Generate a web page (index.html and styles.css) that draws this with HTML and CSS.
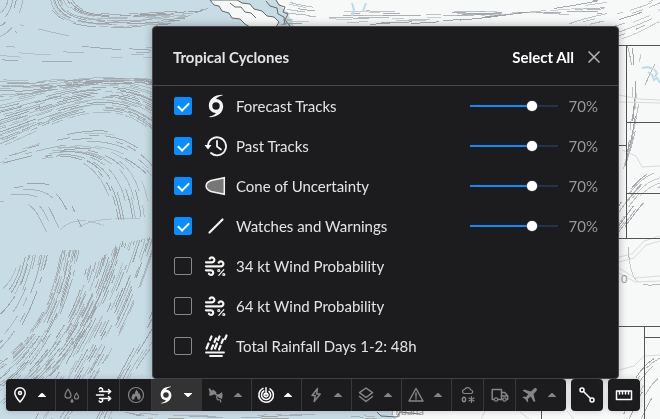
FILE: index.html
```html
<!DOCTYPE html>
<html lang="en">
<head>
<meta charset="utf-8">
<meta name="viewport" content="width=device-width, initial-scale=1">
<title>Tropical Cyclones</title>
<link rel="stylesheet" href="styles.css">
</head>
<body>
<svg class="map" viewBox="0 0 660 419" preserveAspectRatio="xMinYMin slice" aria-hidden="true">
  <rect class="water" width="660" height="419"/>
  <path class="land" d="M276 0L288 14 296 30 330 200 372 380 384 402 396 419H660V0z"/>
  <path class="land coast" d="M210 0l4 5 5 1 3 5 7 2 3 5 8 1 5 5 5 3h26l3-5-5-5-7-1-5-5-8-2-4-5-8-1-5-3z"/>
  <path class="coast-line" d="M276 0l3 5 6 2-2 5 5 2-3 6 5 6M266 1l4 5 7 2 1 6 6 3 1 8M230 3l5 4 6 0 4 5 6 1 5 5M377 412l4 4 16 1 3-5 20 2"/>
  <g id="wind"></g>
  <path class="road" d="M619 95l20 4 21 1M619 102l41 1M622 150l14 6 6 11 18-1M619 257l13-3 12-13 16-5M619 262l15-4 12-13 14-4M619 268l8 5 8 5 25-2M619 273l7 4 9 5 25-1M619 370l15-4 10-10 16-1M567 411l7 8M520 412l9 7M485 411l-4 8"/>
  <path class="lake" d="M642 68l6-1 5 2M648 72l4 3 2 5 3-2 3 5M654 69l3 4-2 4"/>
  <path class="lake" d="M352 3l2 7-2 6M366 3l-3 8"/>
  <path class="border" d="M618 45.5h42M618 145.5h8M627 122.5h33M627 193.5h33M618 238.500h42M618 326.500h42M626.500 45v193M644.500 327v92M644 337.500h16M541.500 403v16"/>
  <text class="place" x="389" y="415">Tijuana</text>
  <text class="place" x="621" y="283">0</text>
</svg>

<svg class="sprite" aria-hidden="true">
  <symbol id="i-cyclone" viewBox="0 0 24 24"><path fill="currentColor" fill-rule="evenodd" d="M18.500 .8C10 .8 4.800 5.500 4.800 12a7 7 0 0 0 7.200 7C10.700 21 8.500 22 5.500 22.600v.6c8.500 0 13.700-4.700 13.700-11.200a7 7 0 0 0-7.200-7c1.300-2 3.500-3 6.500-3.600zM12 8.300a3.700 3.700 0 1 1 0 7.400 3.700 3.700 0 0 1 0-7.400z"/></symbol>
  <symbol id="i-history" viewBox="0 0 24 24"><path class="s2" d="M4 12a9 9 0 1 1 3 7M13 7v5.500l4 3"/><path fill="currentColor" d="M.5 11h7L4 15.500z"/></symbol>
  <symbol id="i-cone" viewBox="0 0 24 24"><path fill="#777" stroke="currentColor" stroke-width="1.500" d="M20.300 3.700v16.600L7 17.500c-6.500-2.500-6.500-8.500 0-11z"/></symbol>
  <symbol id="i-line" viewBox="0 0 24 24"><path class="s25" d="M5.500 18.500l13-13"/></symbol>
  <symbol id="i-windpct" viewBox="0 0 24 24"><path class="s25" d="M2 8.300h6a2.500 2.500 0 1 0-2.300-3.700M2 12.300h15a2.500 2.500 0 1 0-2.300-3.700M2 16.300h5a2.300 2.300 0 1 1-2.100 3.400"/><path class="s1" d="M14.800 21.300l5-5.600"/><circle class="s1" cx="14.800" cy="16.500" r="1"/><circle class="s1" cx="19.800" cy="20.500" r="1"/></symbol>
  <symbol id="i-rain" viewBox="0 0 24 24"><path class="s2" d="M2 18.500h18M6 22h12"/><path class="s25" d="M7.500 2.500L6 6M4.500 9.500l-2 5M12 4.500L10.500 8M9 11.500L7.500 15M15.500 2.500L14 6M13 9.500L11 14.500M19 5.500L17.500 9M16.500 12L15 15.500M22.500 1.500L21 5"/></symbol>
  <symbol id="i-pin" viewBox="0 0 18 18"><path class="s15" d="M9 16C6 12.600 3.800 10 3.800 7a5.200 5.200 0 0 1 10.400 0c0 3-2.200 5.600-5.200 9z"/><circle class="s15" cx="9" cy="7" r="1.500"/></symbol>
  <symbol id="i-drops" viewBox="0 0 18 18"><path class="s1" d="M5 3C3.500 5.500 2 7.200 2 9.200a3 3 0 0 0 6 0C8 7.200 6.500 5.500 5 3zM13.500 7c-1 1.600-2 2.700-2 4a2 2 0 0 0 4 0c0-1.300-1-2.400-2-4z"/><path fill="currentColor" d="M9 12.500c-1 1.500-1.500 2-1.500 2.700a1.500 1.500 0 0 0 3 0c0-.7-.5-1.200-1.500-2.700z"/></symbol>
  <symbol id="i-wind" viewBox="0 0 18 18"><path class="s15" d="M4.500 5.500H15.500M1.500 9h7M4.500 12.500H15.500M4.500 5.500H6a1.800 1.800 0 1 0-1.800-2.500M6 12.500a1.800 1.800 0 1 1-1.800 2.500M13.500 3.500l2.200 2-2.200 2M13.500 10.500l2.200 2-2.200 2"/></symbol>
  <symbol id="i-fire" viewBox="0 0 18 18"><circle class="s1" cx="9" cy="9" r="7.500"/><path fill="currentColor" d="M5 13.500c-1.500-3 1-4.500 1-6l1.300 1C8 6.500 9 5 9 3.500c2 1.500 2.500 3 2.800 4.500l.9-.7c.2 2 2 3.700.3 6.200h-2.500c.3-1.500-.5-2.500-1.500-3.500-1 1-1.800 2-1.500 3.500z"/></symbol>
  <symbol id="i-satellite" viewBox="0 0 18 18"><path fill="currentColor" d="M1.500 2.500l1.200-.3 2.200 2.600 1.300-1.300L9.500 6.300 9 7.600l1.700.9 1.700-.5 2.600-2 .6 3.500-.6 3.500-2.600-1-1.700-1.200L9.300 9.500 7 8.300 5 9.500H2l.7-3z"/><path class="s1" d="M9.500 10.500l1 3.200 3 .3.200 2"/></symbol>
  <symbol id="i-radar" viewBox="0 0 18 18"><path class="s15" d="M9 9V1.800M13 2.800A7.300 7.300 0 1 1 6 2.400M12 5.400A4.600 4.600 0 1 1 6.800 5M10.400 7.500a2 2 0 1 1-2.800 0"/></symbol>
  <symbol id="i-bolt" viewBox="0 0 18 18"><path class="s15" d="M10.500 2.500L5 9.500h3.200l-1 6 6-7.500H9.700z"/></symbol>
  <symbol id="i-layers" viewBox="0 0 18 18"><path class="s15" d="M9 2l6.500 4.700L9 11.500 2.500 6.700zM2.500 10.500L9 15.500l6.500-5"/></symbol>
  <symbol id="i-warn" viewBox="0 0 18 18"><path class="s15" d="M9 2.500l7 12.500H2zM9 7v4M9 12.600v.4"/></symbol>
  <symbol id="i-snow" viewBox="0 0 18 18"><path class="s1" d="M5.500 7.500a2 2 0 0 1 .1-4 3.300 3.300 0 0 1 6.200.5A1.800 1.800 0 0 1 12.500 7.500zM12.500 10.500v6M10 12l5 3M15 12l-5 3"/><ellipse class="s15" cx="5" cy="13.500" rx="1.600" ry="2.200"/></symbol>
  <symbol id="i-truck" viewBox="0 0 18 18"><path class="s15" d="M3 13.500H1.200v-10h9.300v10H7M10.500 6.500h3.200l3 3.500v3.500h-1.200M10.500 13.500h1M10.500 10h6"/><circle class="s1" cx="5" cy="13.500" r="1.700"/><circle class="s1" cx="13.500" cy="13.500" r="1.700"/></symbol>
  <symbol id="i-plane" viewBox="0 0 18 18"><path fill="currentColor" d="M15.500 2.500c-1-1-2.200-.3-3 .5L10 5.500 3 3.500 1.700 4.800l5.600 3.400-2.500 2.700-2.300-.3-1 1 3 1.700 1.700 3 1-1-.3-2.300 2.800-2.500 3.300 5.700 1.300-1.300L12.500 8 15 5.500c.8-.8 1.500-2 .5-3z"/></symbol>
  <symbol id="i-path" viewBox="0 0 18 18"><path class="s15" d="M5.500 5.500l7 7"/><circle class="s15" cx="4" cy="4" r="2"/><circle class="s15" cx="14" cy="14" r="2"/></symbol>
  <symbol id="i-ruler" viewBox="0 0 18 18"><path class="s15" d="M1.500 5h15v8.500h-15zM4.500 5v3M7.500 5v3M10.500 5v3M13.500 5v3"/></symbol>
  <symbol id="i-close" viewBox="0 0 12 12"><path d="M.5 .5l11 11M11.500 .5l-11 11" fill="none" stroke="currentColor" stroke-width="1.500"/></symbol>
  <symbol id="i-caret" viewBox="0 0 8 4"><path fill="currentColor" d="M0 4V3.500L3.500 0h1L8 3.500V4z"/></symbol>
</svg>

<main class="stage">
  <section class="panel" aria-labelledby="panel-title">
    <header class="panel-head">
      <h1 id="panel-title">Tropical Cyclones</h1>
      <button class="select-all" type="button">Select All</button>
      <button class="close" type="button" aria-label="Close"><svg><use href="#i-close"/></svg></button>
    </header>
    <ul class="layers">
      <li><input type="checkbox" id="l1" checked><svg class="icon"><use href="#i-cyclone"/></svg><label for="l1">Forecast Tracks</label><input type="range" aria-label="Forecast Tracks opacity" value="70"><output>70%</output></li>
      <li><input type="checkbox" id="l2" checked><svg class="icon"><use href="#i-history"/></svg><label for="l2">Past Tracks</label><input type="range" aria-label="Past Tracks opacity" value="70"><output>70%</output></li>
      <li><input type="checkbox" id="l3" checked><svg class="icon"><use href="#i-cone"/></svg><label for="l3">Cone of Uncertainty</label><input type="range" aria-label="Cone of Uncertainty opacity" value="70"><output>70%</output></li>
      <li><input type="checkbox" id="l4" checked><svg class="icon"><use href="#i-line"/></svg><label for="l4">Watches and Warnings</label><input type="range" aria-label="Watches and Warnings opacity" value="70"><output>70%</output></li>
      <li><input type="checkbox" id="l5"><svg class="icon"><use href="#i-windpct"/></svg><label for="l5">34 kt Wind Probability</label></li>
      <li><input type="checkbox" id="l6"><svg class="icon"><use href="#i-windpct"/></svg><label for="l6">64 kt Wind Probability</label></li>
      <li><input type="checkbox" id="l7"><svg class="icon"><use href="#i-rain"/></svg><label for="l7">Total Rainfall Days 1-2: 48h</label></li>
    </ul>
  </section>
  <nav class="toolbar" aria-label="Map layers">
    <div class="group">
      <button class="tool wide on" type="button" aria-label="Places"><svg><use href="#i-pin"/></svg><svg class="caret"><use href="#i-caret"/></svg></button>
      <button class="tool" type="button" aria-label="Precipitation"><svg><use href="#i-drops"/></svg></button>
      <button class="tool on" type="button" aria-label="Wind"><svg><use href="#i-wind"/></svg></button>
      <button class="tool" type="button" aria-label="Fire"><svg><use href="#i-fire"/></svg></button>
      <button class="tool wide on open" type="button" aria-label="Tropical cyclones" aria-expanded="true"><svg><use href="#i-cyclone"/></svg><svg class="caret"><use href="#i-caret"/></svg></button>
      <button class="tool wide" type="button" aria-label="Satellite"><svg><use href="#i-satellite"/></svg><svg class="caret"><use href="#i-caret"/></svg></button>
      <button class="tool wide on" type="button" aria-label="Radar"><svg><use href="#i-radar"/></svg><svg class="caret"><use href="#i-caret"/></svg></button>
      <button class="tool wide" type="button" aria-label="Lightning"><svg><use href="#i-bolt"/></svg><svg class="caret"><use href="#i-caret"/></svg></button>
      <button class="tool wide" type="button" aria-label="Layers"><svg><use href="#i-layers"/></svg><svg class="caret"><use href="#i-caret"/></svg></button>
      <button class="tool wide" type="button" aria-label="Alerts"><svg><use href="#i-warn"/></svg><svg class="caret"><use href="#i-caret"/></svg></button>
      <button class="tool" type="button" aria-label="Winter weather"><svg><use href="#i-snow"/></svg></button>
      <button class="tool" type="button" aria-label="Road conditions"><svg><use href="#i-truck"/></svg></button>
      <button class="tool wide" type="button" aria-label="Aviation"><svg><use href="#i-plane"/></svg><svg class="caret"><use href="#i-caret"/></svg></button>
    </div>
    <div class="group"><button class="tool on" type="button" aria-label="Draw path"><svg><use href="#i-path"/></svg></button></div>
    <div class="group"><button class="tool on" type="button" aria-label="Measure"><svg><use href="#i-ruler"/></svg></button></div>
  </nav>
</main>
<script src="wind.js"></script>
</body>
</html>
```
FILE: styles.css
```css
* { box-sizing: border-box; }

body {
  margin: 0;
  background: #c8dce5;
  color: #e4e4e4;
  font-family: Lato, "Open Sans", sans-serif;
  font-size: 15px;
}

button {
  padding: 0;
  border: 0;
  background: none;
  color: inherit;
  font: inherit;
  cursor: pointer;
}

.map { position: fixed; inset: 0; width: 100%; height: 100%; }
.water { fill: #c8dce5; }
.land { fill: #f7f9f9; }
.coast { stroke: #666; stroke-width: 1; }
.coast-line { fill: none; stroke: #666; stroke-width: 1; }
.road { fill: none; stroke: #dcd8da; stroke-width: 1; }
.lake { fill: none; stroke: #c0d9e8; stroke-width: 2; }
.border { fill: none; stroke: #555; stroke-width: 1; }
.place { fill: #9a9a9a; font-size: 11px; }
.streak { fill: none; stroke: #9a9fa4; stroke-width: 1; shape-rendering: crispEdges; }

.sprite { position: absolute; width: 0; height: 0; }
.s1, .s15, .s2, .s25 { fill: none; stroke: currentColor; stroke-linecap: round; stroke-linejoin: round; }
.s1 { stroke-width: 1.2; }
.s15 { stroke-width: 1.5; }
.s2 { stroke-width: 1.8; }
.s25 { stroke-width: 2.2; }

.stage {
  position: relative;
  display: flex;
  flex-direction: column;
  justify-content: flex-end;
  min-height: 100vh;
  padding: 26px 0 8px 6px;
}

.panel {
  margin: 0 41px 0 146px;
  border: 1px solid #48484a;
  border-radius: 4px;
  background: #1c1c1e;
  box-shadow: 0 0 8px rgba(0, 0, 0, .3);
}

.panel-head {
  display: flex;
  align-items: center;
  gap: 14px;
  height: 59px;
  padding: 2px 18px 0 20px;
  border-bottom: 1px solid #48484a;
}
.panel-head h1 { flex: 1; margin: 0; font-size: 15px; font-weight: 700; }
.select-all { font-weight: 700; color: #fff; }
.close { display: flex; color: #b4b4b4; }
.close svg { width: 12px; height: 12px; }

.layers { margin: 0; padding: 0 20px 12px 21px; list-style: none; }
.layers li { display: flex; align-items: center; height: 40px; }
.icon { width: 24px; height: 24px; margin: 0 8px 0 12px; color: #f4f4f4; }
.layers label { flex: 1; }
.layers output { width: 40px; text-align: right; color: #999; }
.layers label, .layers output { padding-bottom: 1px; }

input[type="checkbox"] {
  appearance: none;
  display: grid;
  place-items: center;
  width: 18px;
  height: 18px;
  margin: 0;
  border: 1px solid #88888a;
  border-radius: 2px;
}
input[type="checkbox"]:checked { border-color: #0a8cff; background: #0a8cff; }
input[type="checkbox"]:checked::before {
  content: "";
  width: 9px;
  height: 5px;
  border: solid #fff;
  border-width: 0 0 2px 2px;
  transform: translateY(-1px) rotate(-45deg);
}

input[type="range"] {
  appearance: none;
  width: 98px;
  height: 12px;
  margin: 0 -5px;
  background: linear-gradient(to right, #0a8cff 70%, #223052 70%) center / 88px 2px no-repeat;
}
input[type="range"]::-webkit-slider-thumb {
  appearance: none;
  width: 10px;
  height: 10px;
  border-radius: 50%;
  background: #fff;
  box-shadow: 0 0 1px #fff;
}

.toolbar { display: flex; gap: 5px; }
.group {
  display: flex;
  overflow: hidden;
  border-radius: 4px;
  background: #1c1c1e;
  box-shadow: 0 0 6px rgba(0, 0, 0, .2);
}
.tool {
  display: flex;
  align-items: center;
  justify-content: center;
  width: 32px;
  height: 32px;
  border-right: 1px solid #38383a;
  color: #858585;
}
.tool:last-child { border-right: 0; }
.tool svg { width: 18px; height: 18px; }
.tool.wide { justify-content: flex-start; gap: 9px; width: 50px; padding-left: 5px; }
.tool .caret { width: 8px; height: 4px; }
.tool.on { color: #fff; }
.tool.open { border-right-color: #333; background: #333; }
.tool.open .caret { transform: rotate(180deg); }
```
FILE: wind.js
```js
// Streamlines: each band is filled by interpolating between two cubic curves.
const bands = [
  // [first curve, last curve, line count, streak density]
  [[-10, 40, 15, 35, 20, 15, 24, -5], [-10, 12, 2, 10, 5, 5, 6, -5], 4, 0.6],
  [[48, -4, 48, 30, 100, 32, 170, 24], [72, -4, 80, 20, 120, 14, 210, 8], 12, 0.65],
  [[20, 24, 70, 36, 110, 46, 160, 48], [-5, 62, 60, 68, 100, 58, 160, 60], 8, 0.25],
  [[-5, 78, 50, 84, 100, 72, 160, 80], [-5, 98, 50, 96, 80, 78, 160, 86], 10, 0.65],
  [[-5, 98, 60, 88, 100, 68, 160, 90], [-5, 150, 50, 128, 110, 84, 160, 140], 21, 0.65],
  [[20, 148, 70, 130, 130, 110, 160, 165], [-5, 166, 80, 142, 120, 140, 160, 190], 8, 0.35],
  [[60, 145, 130, 145, 145, 170, 150, 216], [40, 160, 85, 150, 105, 180, 112, 221], 11, 0.5],
  [[20, 182, 75, 175, 72, 200, 86, 226], [-5, 205, 30, 200, 30, 215, 42, 236], 6, 0.35],
  [[50, 230, 65, 215, 75, 222, 82, 230], [85, 229, 100, 218, 130, 218, 160, 214], 2, 0.9],
  [[18, 255, 14, 280, 5, 285, -5, 292], [50, 255, 40, 300, 20, 345, -5, 365], 11, 0.5],
  [[60, 250, 52, 310, 25, 345, -5, 362], [80, 250, 65, 330, 30, 375, -5, 400], 12, 0.65],
  [[85, 270, 70, 335, 30, 370, -5, 405], [125, 240, 100, 330, 65, 365, 25, 400], 15, 0.6],
  [[115, 245, 95, 310, 65, 350, 30, 419], [160, 235, 135, 320, 105, 370, 70, 419], 17, 0.55],
  [[160, 290, 140, 340, 125, 360, 95, 419], [170, 330, 150, 350, 130, 370, 115, 419], 7, 0.5],
  [[115, 410, 200, 420, 260, 410, 390, 416], [150, 419, 220, 428, 280, 415, 380, 424], 5, 0.3],
  [[290, 2, 350, 20, 480, 3, 600, 18], [280, 28, 350, 26, 470, 30, 610, -4], 13, 0.3],
  [[560, 26, 590, 10, 620, 15, 660, -5], [600, 40, 630, 50, 650, 25, 670, 20], 9, 0.35],
  [[620, 40, 640, 80, 630, 110, 628, 160], [665, 70, 630, 110, 645, 130, 618, 180], 9, 0.3],
  [[618, 206, 635, 180, 645, 170, 665, 168], [618, 238, 640, 210, 645, 195, 670, 190], 11, 0.4],
  [[628, 245, 632, 290, 640, 285, 665, 282], [628, 250, 630, 292, 645, 288, 665, 288], 2, 0.5],
  [[618, 411, 630, 380, 640, 360, 665, 350], [640, 425, 650, 410, 655, 390, 668, 385], 8, 0.4]
];

let seed = 7;
const random = () => (seed = (seed * 16807) % 2147483647) / 2147483647;
const layer = document.getElementById("wind");

for (const [from, to, count, density] of bands) {
  for (let i = 0; i < count; i++) {
    const t = (i + random() * 0.7) / count;
    const p = from.map((v, k) => (v + (to[k] - v) * t).toFixed(1));
    const dashes = [];
    for (let k = 0; k < 6; k++) {
      const on = 6 + random() * 38;
      dashes.push(on.toFixed(0), (on * (1 - density) / density * (0.3 + random())).toFixed(0));
    }
    const path = document.createElementNS("http://www.w3.org/2000/svg", "path");
    path.setAttribute("class", "streak");
    path.setAttribute("d", `M${p[0]} ${p[1]}C${p.slice(2).join(" ")}`);
    path.setAttribute("stroke-dasharray", dashes.join(" "));
    path.setAttribute("stroke-dashoffset", (random() * 60).toFixed(0));
    path.setAttribute("opacity", (0.45 + random() * 0.5).toFixed(2));
    layer.append(path);
  }
}
```
